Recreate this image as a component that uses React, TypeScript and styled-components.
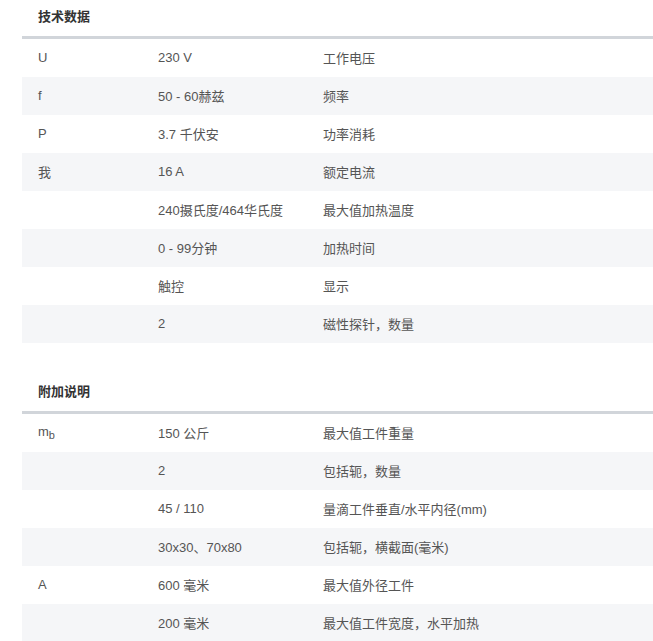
import React from "react";
import styled, { createGlobalStyle } from "styled-components";

const Global = createGlobalStyle`
  html, body { margin: 0; padding: 0; background: #fff; }
  body { font-family: "Liberation Sans", Arial, "Noto Sans CJK SC", sans-serif; }
`;

const Page = styled.div`
  padding: 0 0 0 22px;
  display: flex;
  flex-direction: column;
  gap: 32px;
`;

const Table = styled.table`
  width: 100%;
  border-collapse: collapse;
  table-layout: fixed;
  font-size: 13px;
  color: #555;
`;

const HeadCell = styled.th`
  height: 31px;
  padding: 0 16px 5px;
  text-align: left;
  font-weight: bold;
  color: #333;
  border-bottom: 3px solid #d1d5da;
  vertical-align: middle;
`;

const Row = styled.tr<{ $alt: boolean }>`
  background: ${(p) => (p.$alt ? "#f5f6f8" : "#ffffff")};
`;

const Cell = styled.td`
  height: 36px;
  padding: 0 16px 2px;
  vertical-align: middle;
  white-space: nowrap;
`;

type Item = [React.ReactNode, string, string];

const tech: Item[] = [
  ["U", "230 V", "工作电压"],
  ["f", "50 - 60赫兹", "频率"],
  ["P", "3.7 千伏安", "功率消耗"],
  ["我", "16 A", "额定电流"],
  ["", "240摄氏度/464华氏度", "最大值加热温度"],
  ["", "0 - 99分钟", "加热时间"],
  ["", "触控", "显示"],
  ["", "2", "磁性探针，数量"],
];

const extra: Item[] = [
  [<>m<sub style={{ fontSize: "11px", verticalAlign: "-3px" }}>b</sub></>, "150 公斤", "最大值工件重量"],
  ["", "2", "包括轭，数量"],
  ["", "45 / 110", "量滴工件垂直/水平内径(mm)"],
  ["", "30x30、70x80", "包括轭，横截面(毫米)"],
  ["A", "600 毫米", "最大值外径工件"],
  ["", "200 毫米", "最大值工件宽度，水平加热"],
];

function Section({ title, items }: { title: string; items: Item[] }) {
  return (
    <Table>
      <colgroup>
        <col style={{ width: 120 }} />
        <col style={{ width: 165 }} />
        <col />
      </colgroup>
      <thead>
        <tr>
          <HeadCell colSpan={3}>{title}</HeadCell>
        </tr>
      </thead>
      <tbody>
        {items.map((it, i) => (
          <Row key={i} $alt={i % 2 === 1}>
            <Cell>{it[0]}</Cell>
            <Cell>{it[1]}</Cell>
            <Cell>{it[2]}</Cell>
          </Row>
        ))}
      </tbody>
    </Table>
  );
}

export default function App() {
  return (
    <>
      <Global />
      <Page>
        <Section title="技术数据" items={tech} />
        <Section title="附加说明" items={extra} />
      </Page>
    </>
  );
}
